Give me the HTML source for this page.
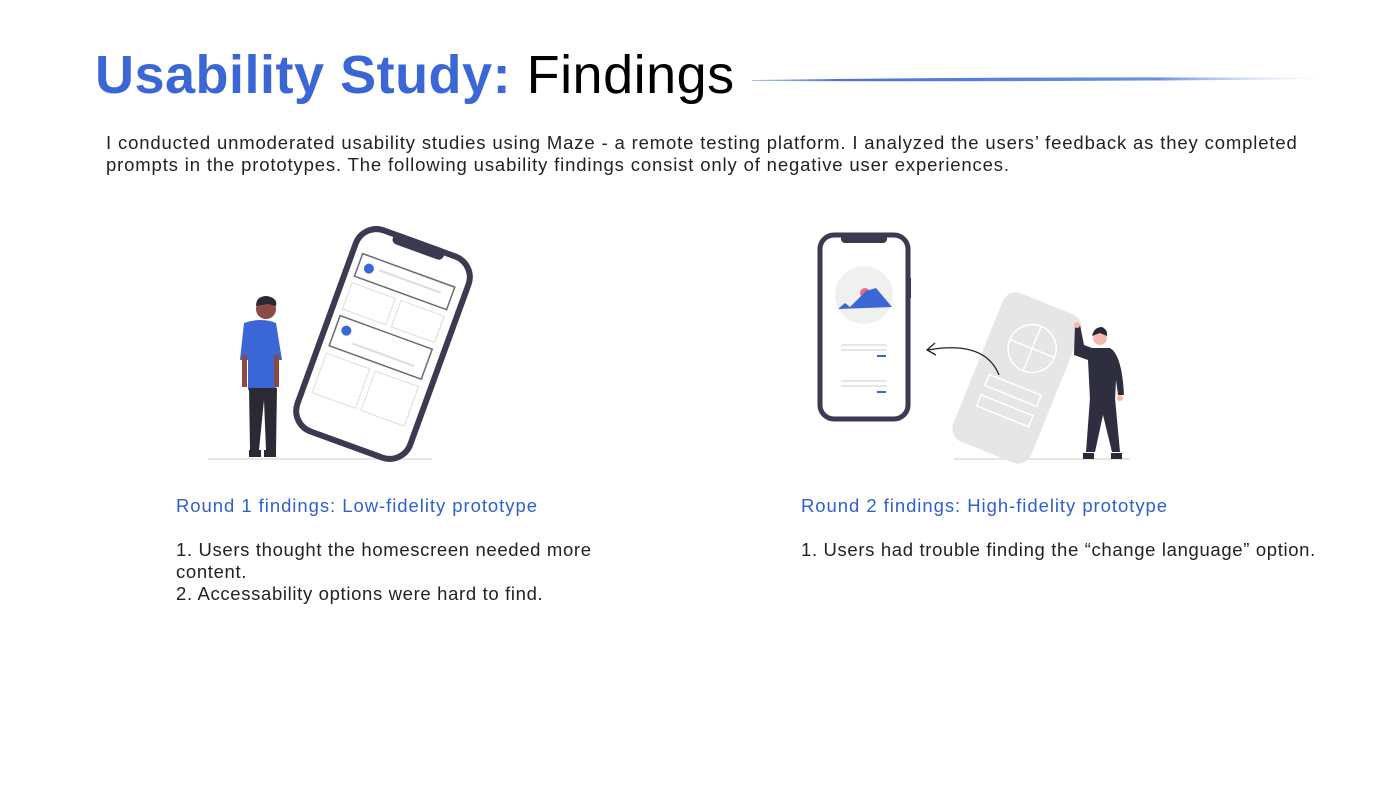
<!DOCTYPE html>
<html><head><meta charset="utf-8"><style>
body{margin:0;width:1400px;height:788px;background:#fff;position:relative;overflow:hidden;font-family:"Liberation Sans",sans-serif;}
.t{position:absolute;white-space:nowrap;}
h1{position:absolute;left:95px;top:44px;margin:0;font-size:54px;font-weight:bold;color:#000;white-space:nowrap;letter-spacing:0.5px}
h1 span{color:#3b67d6}
h1 b{font-weight:normal}
.p{left:106px;font-size:18.5px;color:#222;letter-spacing:0.85px;font-weight:300}
.h{font-size:18.5px;color:#2f5fd0;letter-spacing:0.95px}
.b{font-size:18.5px;color:#222;line-height:22px;letter-spacing:0.65px}
</style></head><body>
<h1><span>Usability Study:</span> <b>Findings</b></h1>
<svg style="position:absolute;left:750px;top:74px" width="580" height="10"><defs><linearGradient id="g" x1="0" x2="1"><stop offset="0" stop-color="#5a7fdc" stop-opacity=".5"/><stop offset=".15" stop-color="#4a72dc"/><stop offset=".7" stop-color="#6a8ee0"/><stop offset="1" stop-color="#c8d6f4" stop-opacity="0"/></linearGradient></defs><path d="M2 6 Q300 2 578 4 L578 5 Q300 8 2 7Z" fill="url(#g)"/></svg>
<div class="t p" style="top:132px">I conducted unmoderated usability studies using Maze - a remote testing platform. I analyzed the users’ feedback as they completed</div>
<div class="t p" style="top:154px">prompts in the prototypes. The following usability findings consist only of negative user experiences.</div>

<svg style="position:absolute;left:0;top:0" width="1400" height="788">
<line x1="208" y1="459" x2="432" y2="459" stroke="#e6e6e6" stroke-width="2"/>
<g transform="rotate(20 383 344)">
<rect x="323" y="237" width="120" height="214" rx="22" fill="#fff" stroke="#3a3a50" stroke-width="6"/>
<rect x="356" y="234" width="54" height="12" rx="5" fill="#3a3a50"/>
<rect x="333" y="266" width="98" height="24" fill="#fff" stroke="#6a6a7a" stroke-width="1.5"/>
<circle cx="344" cy="278" r="5" fill="#3b67d6"/>
<line x1="354" y1="276" x2="420" y2="276" stroke="#ddd" stroke-width="2"/>
<rect x="333" y="297" width="46" height="28" fill="none" stroke="#ddd"/>
<rect x="385" y="297" width="46" height="28" fill="none" stroke="#ddd"/>
<rect x="333" y="332" width="98" height="32" fill="#fff" stroke="#6a6a7a" stroke-width="1.5"/>
<circle cx="344" cy="344" r="5" fill="#3b67d6"/>
<line x1="354" y1="354" x2="420" y2="354" stroke="#ddd" stroke-width="2"/>
<rect x="333" y="372" width="46" height="42" fill="none" stroke="#ddd"/>
<rect x="385" y="372" width="46" height="42" fill="none" stroke="#ddd"/>
</g>
<circle cx="266" cy="309" r="10" fill="#8a4a46"/>
<path d="M256 306 Q256 296 267 296 Q278 298 276 306 L268 304Z" fill="#2a2a35"/>
<path d="M244 323 Q262 317 276 323 L282 360 L274 360 L276 390 L248 390 L248 360 L240 360Z" fill="#3b67d6"/>
<rect x="242" y="355" width="5" height="32" fill="#8a4a46"/>
<rect x="274" y="355" width="5" height="32" fill="#8a4a46"/>
<path d="M249 388 L277 388 L276 450 L266 450 L264 400 L259 450 L250 450Z" fill="#2a2a35"/>
<rect x="249" y="450" width="12" height="7" fill="#2a2a35"/>
<rect x="264" y="450" width="12" height="7" fill="#2a2a35"/>

<line x1="954" y1="459" x2="1130" y2="459" stroke="#e6e6e6" stroke-width="2"/>
<rect x="820" y="235" width="88" height="184" rx="14" fill="#fff" stroke="#3a3a50" stroke-width="5"/>
<rect x="841" y="233" width="46" height="10" rx="4" fill="#3a3a50"/>
<rect x="908" y="278" width="3" height="20" fill="#3a3a50"/>
<circle cx="864" cy="295" r="29" fill="#f0f0f0"/>
<circle cx="865" cy="293" r="5" fill="#f06a7a"/>
<path d="M838 309 L845 303 L850 307 L866 291 L876 288 L892 307Z" fill="#3b67d6"/>
<line x1="841" y1="345" x2="887" y2="345" stroke="#ddd" stroke-width="1.5"/>
<line x1="841" y1="350" x2="887" y2="350" stroke="#ddd" stroke-width="1.5"/>
<line x1="877" y1="356" x2="886" y2="356" stroke="#3b67d6" stroke-width="2"/>
<line x1="841" y1="381" x2="887" y2="381" stroke="#ddd" stroke-width="1.5"/>
<line x1="841" y1="386" x2="887" y2="386" stroke="#ddd" stroke-width="1.5"/>
<line x1="877" y1="392" x2="886" y2="392" stroke="#3b67d6" stroke-width="2"/>
<g transform="rotate(22 1017 378)">
<rect x="975" y="298" width="84" height="160" rx="14" fill="#e6e6e6"/>
<circle cx="1020" cy="345" r="24" fill="none" stroke="#fff" stroke-width="1.5"/>
<line x1="996" y1="345" x2="1044" y2="345" stroke="#fff" stroke-width="1.5"/>
<line x1="1020" y1="321" x2="1020" y2="369" stroke="#fff" stroke-width="1.5"/>
<rect x="990" y="385" width="56" height="12" fill="none" stroke="#fff" stroke-width="1.5"/>
<rect x="990" y="407" width="56" height="12" fill="none" stroke="#fff" stroke-width="1.5"/>
</g>
<path d="M999 375 Q985 340 928 350" fill="none" stroke="#222" stroke-width="1.3"/>
<path d="M935 343 L927 350 L936 355" fill="none" stroke="#222" stroke-width="1.3"/>
<circle cx="1100" cy="338" r="7" fill="#f7b8b0"/>
<path d="M1092 336 Q1094 327 1102 327 Q1108 330 1107 336 L1100 333Z" fill="#2a2a35"/>
<path d="M1075 325 L1080 325 L1084 345 L1092 348 L1110 348 Q1122 355 1124 395 L1118 395 L1116 380 L1115 400 L1090 400 L1088 360 L1074 355Z" fill="#2f2e41"/>
<path d="M1090 398 L1115 398 L1120 452 L1112 452 L1103 415 L1095 452 L1086 452Z" fill="#2f2e41"/>
<circle cx="1077" cy="325" r="3" fill="#f7b8b0"/>
<circle cx="1120" cy="398" r="3" fill="#f7b8b0"/>
<rect x="1083" y="453" width="11" height="6" fill="#2a2a35"/>
<rect x="1111" y="453" width="11" height="6" fill="#2a2a35"/>
</svg>

<div class="t h" style="left:176px;top:495px">Round 1 findings: Low-fidelity prototype</div>
<div class="t b" style="left:176px;top:539px">1. Users thought the homescreen needed more<br>content.<br>2. Accessability options were hard to find.</div>
<div class="t h" style="left:801px;top:495px">Round 2 findings: High-fidelity prototype</div>
<div class="t b" style="left:801px;top:539px">1. Users had trouble finding the “change language” option.</div>
</body></html>
